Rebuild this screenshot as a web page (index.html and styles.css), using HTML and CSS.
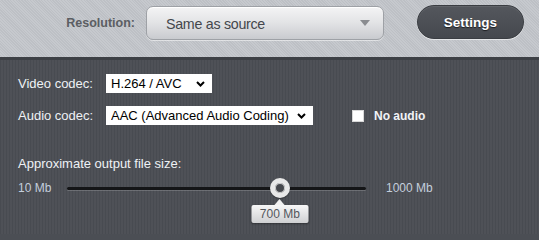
FILE: index.html
```html
<!DOCTYPE html>
<html>
<head>
<meta charset="utf-8">
<link rel="stylesheet" href="styles.css">
</head>
<body>
<div class="topbar">
  <span class="res-label">Resolution:</span>
  <div class="res-select">
    <span class="res-value">Same as source</span>
    <svg class="res-arrow" width="10" height="6" viewBox="0 0 10 6"><path d="M0 0 L10 0 L5 6 Z" fill="#8a8c90"/></svg>
  </div>
  <button class="settings">Settings</button>
</div>
<div class="panel">
  <div class="codecs">
    <label class="lbl">Video codec:</label>
    <div class="field">
      <select class="sel sel-video"><option>H.264 / AVC</option></select>
    </div>
    <label class="lbl">Audio codec:</label>
    <div class="field">
      <select class="sel sel-audio"><option>AAC (Advanced Audio Coding)</option></select>
      <label class="noaudio"><span class="box"></span>No audio</label>
    </div>
  </div>
  <div class="size-title">Approximate output file size:</div>
  <div class="slider-row">
    <span class="min">10 Mb</span>
    <div class="track">
      <div class="thumb" style="left: 71.2%">
        <div class="tip">700 Mb</div>
      </div>
    </div>
    <span class="max">1000 Mb</span>
  </div>
</div>
</body>
</html>
```
FILE: styles.css
```css
html, body {
  margin: 0;
  padding: 0;
  height: 100%;
}
body {
  width: 539px;
  height: 234px;
  overflow: hidden;
  font-family: "Liberation Sans", Arial, sans-serif;
  background: #4b4e54;
  display: flex;
  flex-direction: column;
}
.topbar {
  height: 57px;
  box-sizing: border-box;
  background-color: #c3c6cb;
  background-image: repeating-linear-gradient(45deg, rgba(255,255,255,0.05) 0 1px, rgba(0,0,0,0.03) 1px 2px);
  display: flex;
  justify-content: flex-end;
  align-items: flex-start;
  padding: 5px 15px 0 0;
}
.res-label {
  font-weight: bold;
  font-size: 12.5px;
  color: #5b5e63;
  margin-top: 11px;
  margin-right: 11px;
}
.res-select {
  width: 238px;
  height: 34px;
  box-sizing: border-box;
  margin-top: 1px;
  border: 1px solid #9ea1a6;
  border-radius: 7px;
  background: linear-gradient(#f4f4f5, #e2e3e5 50%, #c9cbcf);
  box-shadow: inset 0 1px 0 #fff, 0 1px 0 rgba(255,255,255,0.5);
  display: flex;
  align-items: center;
  justify-content: space-between;
  padding: 0 13px 0 19px;
}
.res-value {
  font-size: 15px;
  color: #44474c;
  letter-spacing: -0.3px;
  transform: scaleX(0.95);
  transform-origin: left center;
}
.settings {
  margin-left: 33px;
  width: 107px;
  height: 34px;
  border-radius: 17px;
  border: 1px solid #3a3d42;
  background: linear-gradient(#54575d, #45484e);
  box-shadow: 0 1px 0 #e4e5e7, inset 0 1px 0 rgba(255,255,255,0.08);
  color: #ffffff;
  font-family: "Liberation Sans", Arial, sans-serif;
  font-weight: bold;
  font-size: 13.5px;
  text-shadow: 0 1px 1px #1c1d20;
  padding: 0;
}
.panel {
  flex: 1;
  border-top: 3px solid #3d4045;
  background-color: #4b4e54;
  background-image: repeating-linear-gradient(90deg, rgba(0,0,0,0.04) 0 1px, rgba(255,255,255,0.02) 1px 3px);
  padding: 14px 18px 0 18px;
  color: #eef1f5;
  position: relative;
}
.codecs {
  display: grid;
  grid-template-columns: 88px auto;
  grid-auto-rows: 19px;
  row-gap: 13px;
  align-items: center;
}
.lbl {
  font-size: 13px;
  color: #eef1f5;
}
.field {
  display: flex;
  align-items: center;
  height: 19px;
}
.sel {
  appearance: none;
  -webkit-appearance: none;
  height: 19px;
  border: 1px solid #ffffff;
  border-radius: 0;
  background-color: #fff;
  background-image: url("data:image/svg+xml;utf8,<svg xmlns='http://www.w3.org/2000/svg' width='9' height='6' viewBox='0 0 9 6'><path d='M1 1 L4.5 4.5 L8 1' fill='none' stroke='black' stroke-width='2'/></svg>");
  background-repeat: no-repeat;
  background-position: right 6px center;
  font-family: "Liberation Sans", Arial, sans-serif;
  font-size: 13px;
  color: #000;
  padding: 0 0 0 4px;
  margin: 0;
  outline: none;
}
.sel-video {
  width: 106px;
}
.sel-audio {
  width: 207px;
}
.noaudio {
  margin-left: 39px;
  display: flex;
  align-items: center;
  font-weight: bold;
  font-size: 12px;
  color: #f2f4f7;
}
.box {
  width: 12px;
  height: 12px;
  box-sizing: border-box;
  background: #fff;
  border: 1px solid #d8d8d8;
  margin-right: 10px;
}
.size-title {
  margin-top: 31px;
  font-size: 13px;
  line-height: 16px;
  color: #eef1f5;
}
.slider-row {
  margin-top: 6px;
  height: 20px;
  display: flex;
  align-items: center;
  font-size: 12px;
  color: #c4cedc;
}
.min {
  width: 49px;
}
.track {
  position: relative;
  width: 299px;
  height: 3px;
  border-radius: 2px;
  background: #141517;
  box-shadow: 0 1px 0 rgba(255,255,255,0.18);
}
.max {
  margin-left: 20px;
}
.thumb {
  position: absolute;
  top: -9px;
  width: 20px;
  height: 20px;
  margin-left: -10px;
  box-sizing: border-box;
  border-radius: 50%;
  background: #46484d;
  border: 5px solid #e8e8e8;
  box-shadow: inset 0 0 0 1px #d0d0d0, 0 1px 1px rgba(0,0,0,0.3);
}
.tip {
  position: absolute;
  top: 22px;
  left: 50%;
  transform: translateX(-50%);
  width: 57px;
  height: 18px;
  box-sizing: border-box;
  background: linear-gradient(#f7f7f7, #cfd0d2);
  border-radius: 2px;
  color: #54575c;
  font-size: 12px;
  line-height: 18px;
  text-align: center;
  box-shadow: 0 1px 2px rgba(0,0,0,0.35);
}
.tip::before {
  content: "";
  position: absolute;
  top: -6px;
  left: 50%;
  margin-left: -5px;
  border-left: 5px solid transparent;
  border-right: 5px solid transparent;
  border-bottom: 6px solid #f1f1f1;
}
```
